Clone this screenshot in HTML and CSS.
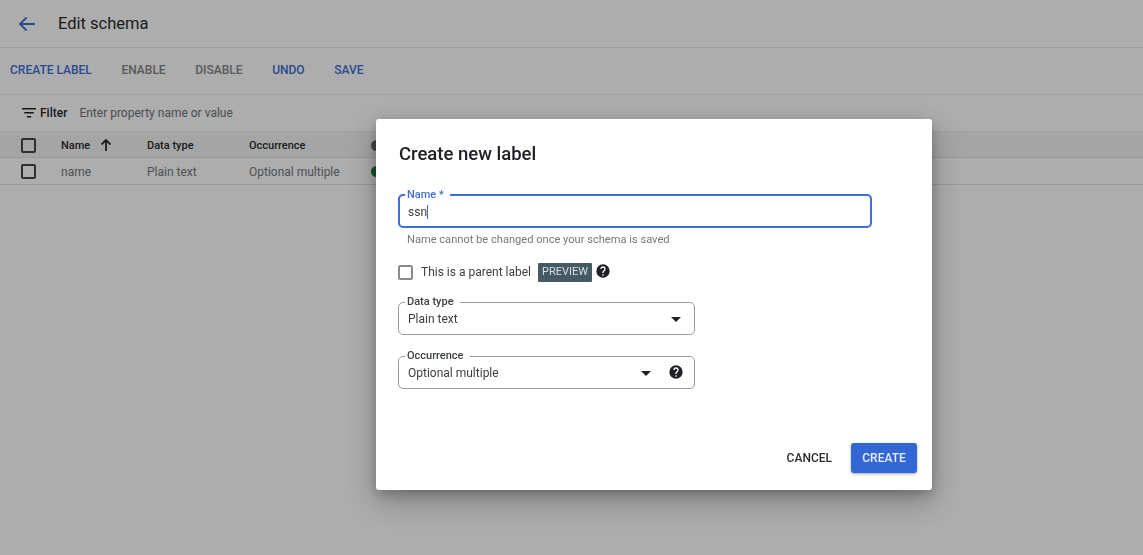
FILE: index.html
```html
<!DOCTYPE html>
<html lang="en">
<head>
    <meta charset="UTF-8">
    <meta name="viewport" content="width=device-width, initial-scale=1.0">
    <title>Edit schema</title>
    <link rel="stylesheet" href="styles.css">
</head>
<body>
    <div class="page">
        <header class="title-bar">
            <svg class="back" viewBox="0 0 24 24" width="24" height="24"><path d="M20 12H5M11.5 5.5L5 12l6.500 6.500" fill="none" stroke="currentColor" stroke-width="1.800"/></svg>
            <h1>Edit schema</h1>
        </header>
        <nav class="toolbar">
            <button class="tool">CREATE LABEL</button>
            <button class="tool off">ENABLE</button>
            <button class="tool off">DISABLE</button>
            <button class="tool">UNDO</button>
            <button class="tool">SAVE</button>
        </nav>
        <div class="filter">
            <svg viewBox="0 0 14 10" width="14" height="10"><path d="M0 0h14v1.600H0zM2.300 4h9.400v1.600H2.300zM4.800 8h4.400v1.600H4.800z" fill="currentColor"/></svg>
            <strong>Filter</strong>
            <span>Enter property name or value</span>
        </div>
        <div class="row head">
            <span class="box"></span>
            <span class="col-name">Name
                <svg viewBox="0 0 14 14" width="14" height="14"><path d="M7 13V2M2.500 6.500L7 2l4.500 4.500" fill="none" stroke="currentColor" stroke-width="1.800"/></svg>
            </span>
            <span class="col-type">Data type</span>
            <span class="col-occ">Occurrence</span>
            <span class="dot grey"></span>
        </div>
        <div class="row">
            <span class="box"></span>
            <span class="col-name">name</span>
            <span class="col-type">Plain text</span>
            <span class="col-occ">Optional multiple</span>
            <span class="dot green"></span>
        </div>
    </div>

    <div class="scrim"></div>

    <form class="dialog">
        <h2>Create new label</h2>

        <fieldset class="field focus">
            <legend>Name *</legend>
            <div class="value">ssn<i class="caret"></i></div>
        </fieldset>
        <p class="hint">Name cannot be changed once your schema is saved</p>

        <div class="parent">
            <span class="check"></span>
            <span>This is a parent label</span>
            <span class="badge">PREVIEW</span>
            <svg class="help" viewBox="0 0 24 24" width="16" height="16"><path d="M12 2a10 10 0 1 0 0 20 10 10 0 0 0 0-20zm1 17h-2v-2h2v2zm2.100-7.700l-.9.900c-.7.700-1.200 1.300-1.200 2.800h-2v-.5c0-1.100.5-2.100 1.200-2.800l1.200-1.300c.4-.3.600-.8.600-1.400a2 2 0 0 0-4 0H8a4 4 0 0 1 8 0c0 .9-.4 1.700-.9 2.300z" fill="currentColor"/></svg>
        </div>

        <fieldset class="field select">
            <legend>Data type</legend>
            <div class="value">Plain text<i class="arrow"></i></div>
        </fieldset>

        <fieldset class="field select occ">
            <legend>Occurrence</legend>
            <div class="value">Optional multiple<i class="arrow"></i>
                <svg class="help" viewBox="0 0 24 24" width="16" height="16"><path d="M12 2a10 10 0 1 0 0 20 10 10 0 0 0 0-20zm1 17h-2v-2h2v2zm2.100-7.700l-.9.900c-.7.700-1.200 1.300-1.200 2.800h-2v-.5c0-1.100.5-2.100 1.200-2.800l1.200-1.300c.4-.3.600-.8.600-1.400a2 2 0 0 0-4 0H8a4 4 0 0 1 8 0c0 .9-.4 1.700-.9 2.300z" fill="currentColor"/></svg>
            </div>
        </fieldset>

        <div class="actions">
            <button type="button" class="cancel">CANCEL</button>
            <button type="button" class="create">CREATE</button>
        </div>
    </form>
</body>
</html>
```

FILE: styles.css
```css
* {
    box-sizing: border-box;
}
html, body {
    height: 100%;
}
body {
    margin: 0;
    overflow: hidden;
    font-family: Roboto, Arial, sans-serif;
    font-size: 12px;
    color: #3c4043;
    background: #fff;
}
button {
    font-family: inherit;
    border: none;
    background: none;
    padding: 0;
}

.title-bar {
    height: 48px;
    display: flex;
    align-items: center;
    padding-left: 15px;
    border-bottom: 1px solid #e8e8e8;
    color: #2a2c2e;
}
.back {
    color: #3f6fd6;
}
.title-bar h1 {
    margin: 0 0 0 19px;
    font-size: 16.500px;
    font-weight: 400;
}

.toolbar {
    height: 47px;
    display: flex;
    align-items: center;
    gap: 29.600px;
    padding: 0 0 2px 10px;
    border-bottom: 1px solid #e8e8e8;
}
.tool {
    font-size: 12px;
    font-weight: 500;
    color: #3f6fd6;
}
.tool.off {
    color: #858585;
}

.filter {
    height: 36px;
    display: flex;
    align-items: center;
    padding-left: 22px;
    color: #6f7275;
}
.filter svg {
    color: #202124;
}
.filter strong {
    margin: 0 12px 0 4px;
    font-weight: 500;
    color: #2a2c2e;
}

.row {
    height: 27px;
    display: flex;
    align-items: center;
    padding: 1px 0 0 21px;
    border-bottom: 1px solid #e4e4e4;
    color: #75787b;
}
.row.head {
    background: #f4f4f4;
    color: #2a2c2e;
    font-size: 11px;
    font-weight: 500;
    border-top: 1px solid #ececec;
}
.box {
    width: 15px;
    height: 15px;
    border: 2px solid #444;
    border-radius: 2px;
}
.col-name {
    width: 86px;
    margin-left: 25px;
    display: flex;
    align-items: center;
    gap: 9px;
}
.col-type {
    width: 102px;
}
.col-occ {
    width: 122px;
}
.dot {
    width: 11px;
    height: 11px;
    border-radius: 50%;
}
.dot.grey {
    background: #666;
}
.dot.green {
    background: #188038;
}

.scrim {
    position: fixed;
    inset: 0;
    background: rgba(0, 0, 0, 0.32);
}

.dialog {
    position: absolute;
    left: 376px;
    top: 119px;
    width: 556px;
    height: 371px;
    padding: 23px 15px 17px 22px;
    display: flex;
    flex-direction: column;
    background: #fff;
    border-radius: 3px;
    box-shadow: 0 11px 30px rgba(0, 0, 0, 0.28), 0 4px 12px rgba(0, 0, 0, 0.2);
    color: #3c4043;
}
.dialog h2 {
    margin: 0 0 23px 1px;
    font-size: 18.500px;
    line-height: 24px;
    font-weight: 500;
    color: #202124;
}

.field {
    margin: 0;
    padding: 0 9px;
    width: 297px;
    height: 39px;
    border: 1px solid #9a9a9a;
    border-radius: 5px;
    min-width: 0;
}
.field legend {
    margin-left: -3px;
    padding: 0 6px 0 2px;
    font-size: 11px;
    line-height: 12px;
    font-weight: 500;
    color: #3c4043;
}
.value {
    display: flex;
    align-items: center;
    height: 22px;
    font-size: 12px;
    color: #3c4043;
}
.field.focus {
    width: 474px;
    border: 2px solid #3f6fd6;
    padding: 0 8px;
}
.field.focus legend {
    color: #3f6fd6;
}
.caret {
    width: 1px;
    height: 14px;
    background: #3f6fd6;
}
.hint {
    margin: 5px 0 0 9px;
    font-size: 11.100px;
    line-height: 13px;
    color: #75787b;
}

.parent {
    margin-top: 17px;
    display: flex;
    align-items: center;
    font-size: 12px;
    height: 18px;
}
.check {
    width: 15px;
    height: 15px;
    margin-right: 8px;
    border: 2px solid #8a8a8a;
    border-radius: 2px;
}
.badge {
    margin-left: 7px;
    padding: 0 4px;
    height: 19px;
    line-height: 17px;
    font-size: 11px;
    color: #d6dfe3;
    background: #455a64;
    border-radius: 1px;
}
.parent .help {
    margin: -2px 0 0 3px;
    color: #202124;
}

.select {
    margin-top: 15px;
}
.arrow {
    margin-left: auto;
    margin-right: 4px;
    width: 0;
    height: 0;
    border-left: 5px solid transparent;
    border-right: 5px solid transparent;
    border-top: 5px solid #202124;
}
.occ .arrow {
    margin-right: 0;
}
.value .help {
    margin: -2px 1px 0 17px;
    color: #202124;
}

.actions {
    margin-top: auto;
    display: flex;
    justify-content: flex-end;
    align-items: center;
    gap: 19px;
}
.cancel {
    font-size: 12px;
    font-weight: 500;
    color: #2a2c2e;
}
.create {
    width: 66px;
    height: 30px;
    font-size: 12px;
    font-weight: 500;
    color: #e8eefb;
    background: #3367d6;
    border-radius: 3px;
    box-shadow: 0 1px 3px rgba(0, 0, 0, 0.35);
}
```
